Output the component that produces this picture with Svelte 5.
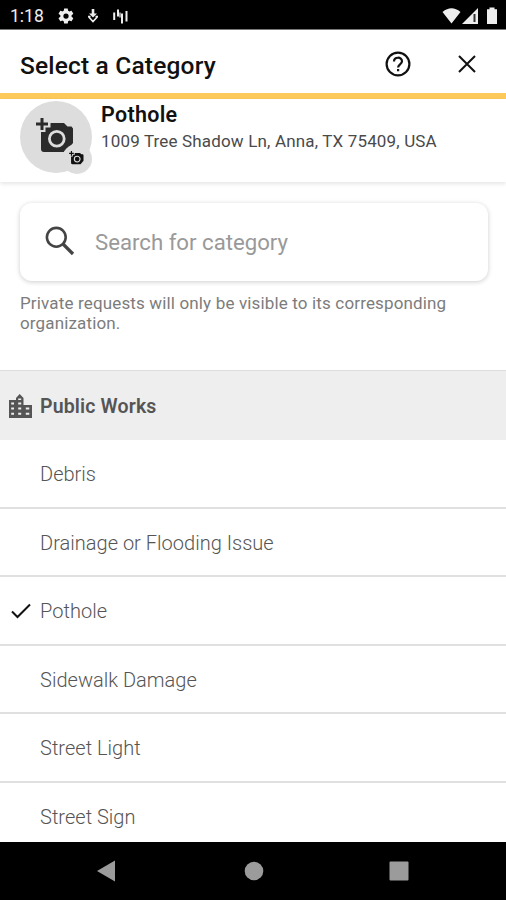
<script>
	const title = 'Select a Category';
	const categories = [
		'Debris',
		'Drainage or Flooding Issue',
		'Pothole',
		'Sidewalk Damage',
		'Street Light',
		'Street Sign'
	];

	let selected = $state('Pothole');
	let query = $state('');
</script>

{#snippet camera(className)}
	<svg class={className} viewBox="0 0 38 36" aria-hidden="true">
		<path
			fill="currentColor"
			d="M4.500 0h3v4.500H12v3H7.500V12h-3V7.500H0v-3h4.500zM14.500 5H28l3.500 3.500h4L37 10.500V25l-7.500 9H8q-3 0-3-3V14h4.500V9.500h5z"
		/>
		<circle class="lens" cx="20.800" cy="20.800" r="7.400" />
	</svg>
{/snippet}

<div class="screen">
	<div class="status">
		<span class="time">1:18</span>
		<svg class="gear" width="18" height="18" viewBox="0 0 24 24" aria-hidden="true" fill="currentColor">
			<path
				d="M19.400 13a7.700 7.700 0 0 0 0-2l2.100-1.600c.2-.2.2-.4.1-.7l-2-3.400c-.1-.2-.4-.3-.6-.2l-2.500 1a7.300 7.300 0 0 0-1.700-1l-.4-2.600c0-.3-.2-.5-.5-.5h-4c-.3 0-.5.200-.5.500L9 5.100a7.300 7.300 0 0 0-1.700 1l-2.500-1c-.2-.1-.5 0-.6.200l-2 3.400c-.1.300 0 .5.100.7L4.500 11a7.700 7.700 0 0 0 0 2l-2.200 1.600c-.2.200-.2.400-.1.700l2 3.400c.1.200.4.300.6.200l2.500-1a7.300 7.300 0 0 0 1.700 1l.4 2.600c0 .3.200.5.500.5h4c.3 0 .5-.2.5-.5l.4-2.600a7.300 7.300 0 0 0 1.700-1l2.500 1c.2.100.5 0 .6-.2l2-3.400c.1-.3.100-.5-.1-.7zM12 15.500a3.500 3.500 0 1 1 0-7 3.500 3.500 0 0 1 0 7z"
			/>
		</svg>
		<svg class="download" width="12" height="14" viewBox="0 0 12 14" aria-hidden="true" fill="none" stroke="currentColor">
			<path stroke-width="2.600" d="M6 0v6" />
			<path fill="currentColor" stroke="none" d="M2 4.500h8L6 8.500z" />
			<path stroke-width="1.700" d="M1 7.500h2.500M8.500 7.500H11M1.800 8L6 12.500 10.200 8" />
		</svg>
		<svg class="bars" width="15" height="16" viewBox="0 0 15 16" aria-hidden="true" stroke="currentColor" stroke-width="2">
			<path d="M1.200 4.500v7.500M5 1.500v7M9 5.500v10M13.500 3v10.500" />
			<path stroke-width="1.200" d="M7 4.500v5" />
		</svg>
		<span class="spacer"></span>
		<svg class="signal" width="56" height="18" viewBox="0 0 56 18" aria-hidden="true" fill="currentColor">
			<path d="M.5 5Q9.500-2.500 18.500 5L9.500 16.500zM36 1v16H20z" />
			<path fill="#333" d="M31.500 7h2v8h-2z" />
			<path d="M47.500 .5h5V2.200H55V17H45V2.200h2.500z" />
		</svg>
	</div>

	<header>
		<h1>{title}</h1>
		<button type="button" class="help" aria-label="Help">
			<svg width="26" height="26" viewBox="0 0 26 26" aria-hidden="true" fill="none" stroke="currentColor" stroke-width="2.200">
				<circle cx="13" cy="13" r="11.400" />
				<path d="M9 10.500C9 5.500 17 5.500 17 10.300c0 3-3.900 3.200-3.900 6.200M13.100 18v2.300" />
			</svg>
		</button>
		<button type="button" aria-label="Close">
			<svg width="18" height="18" viewBox="0 0 18 18" aria-hidden="true" fill="none" stroke="currentColor" stroke-width="2">
				<path d="M1 1l16 16M17 1L1 17" />
			</svg>
		</button>
	</header>

	<section class="report">
		<div class="avatar">
			{@render camera('photo')}
			<span class="badge">{@render camera('mini')}</span>
		</div>
		<div class="details">
			<h2>Pothole</h2>
			<p>1009 Tree Shadow Ln, Anna, TX 75409, USA</p>
		</div>
	</section>

	<section class="search">
		<label class="field">
			<svg width="30" height="30" viewBox="0 0 30 30" aria-hidden="true" fill="none" stroke="currentColor" stroke-width="2.600">
				<circle cx="11.300" cy="11.300" r="9.400" />
				<path stroke-width="3.200" d="M18 18l10 10" />
			</svg>
			<input type="text" placeholder="Search for category" bind:value={query} />
		</label>
		<p class="note">Private requests will only be visible to its corresponding organization.</p>
	</section>

	<div class="group">
		<svg width="24" height="24" viewBox="0 0 24 24" aria-hidden="true" fill="currentColor">
			<path
				fill-rule="evenodd"
				d="M1 6h7V4l3.700-4L15.500 4v7H24v13H1zM3.200 8.500v2h2.800v-2zM3.200 13.500v2h2.800v-2zM3.200 18.800v2h2.800v-2zM10.200 4.500v1.500h3V4.500zM10.200 8.500v2h3v-2zM10.200 13.500v2h3v-2zM10.200 18.800v2h3v-2zM17.800 13.500v2h3.500v-2zM17.800 18.800v2h3.500v-2z"
			/>
		</svg>
		<span>Public Works</span>
	</div>

	<ul>
		{#each categories as category}
			<li>
				<button type="button" class="row" onclick={() => (selected = category)}>
					<span class="mark">
						{#if category === selected}
							<svg width="20" height="16" viewBox="0 0 20 16" aria-hidden="true" fill="none" stroke="currentColor" stroke-width="2">
								<path d="M1 8.500l5.500 5.500L19 1.500" />
							</svg>
						{/if}
					</span>
					<span>{category}</span>
				</button>
			</li>
		{/each}
	</ul>

	<nav>
		<svg width="18" height="22" viewBox="0 0 18 22" aria-hidden="true"><path d="M0 11L18 .5v21z" /></svg>
		<svg width="20" height="20" viewBox="0 0 20 20" aria-hidden="true"><circle cx="10" cy="10" r="9.300" /></svg>
		<svg width="20" height="20" viewBox="0 0 20 20" aria-hidden="true"><rect x=".5" y=".5" width="19" height="19" rx="1" /></svg>
	</nav>
</div>

<style>
	.screen {
		display: flex;
		flex-direction: column;
		width: 506px;
		height: 900px;
		overflow: hidden;
		background: #fff;
		color: #111;
		font-family: Roboto, 'Liberation Sans', sans-serif;
	}

	h1,
	h2,
	p,
	ul {
		margin: 0;
		padding: 0;
	}

	button {
		display: flex;
		padding: 0;
		border: 0;
		background: none;
		color: inherit;
		font: inherit;
		cursor: pointer;
	}

	.status {
		flex: none;
		display: flex;
		align-items: center;
		box-sizing: border-box;
		height: 30px;
		padding: 2px 8px 0 10px;
		border-bottom: 1px solid #777;
		background: #000;
		color: #eee;
	}

	.time {
		width: 47px;
		font-size: 17.500px;
		font-weight: 400;
	}

	.download {
		margin-left: 12px;
	}

	.bars {
		margin-left: 14px;
	}

	.spacer {
		flex: 1;
	}

	header {
		flex: none;
		display: flex;
		align-items: center;
		box-sizing: border-box;
		height: 69px;
		padding: 0 30px 0 20px;
		border-bottom: 6px solid #fdc95a;
	}

	h1 {
		flex: 1;
		padding-top: 8px;
		font-size: 24.500px;
		font-weight: 500;
		line-height: 29px;
		letter-spacing: 0.18px;
	}

	header button {
		padding-top: 5px;
	}

	.help {
		margin-right: 47px;
	}

	.report {
		flex: none;
		display: flex;
		height: 83px;
		padding-left: 20px;
		box-shadow: 0 2px 4px rgba(0, 0, 0, 0.1);
	}

	.avatar {
		position: relative;
		box-sizing: border-box;
		width: 72px;
		height: 72px;
		margin-top: 2px;
		padding: 17px 0 0 16px;
		border-radius: 50%;
		background: #ddd;
		color: #2b2b2b;
	}

	.avatar :global(.photo) {
		display: block;
		width: 38px;
		height: 36px;
	}

	.badge {
		position: absolute;
		right: 0;
		bottom: -1px;
		display: flex;
		align-items: center;
		justify-content: center;
		box-sizing: border-box;
		width: 30px;
		height: 30px;
		padding: 0 1px 2px 0;
		border-radius: 50%;
		background: #ddd;
		color: #111;
	}

	.avatar :global(.mini) {
		width: 15px;
		height: 14px;
	}

	.lens {
		fill: none;
		stroke: #ddd;
		stroke-width: 2.800;
	}

	.details {
		padding: 4px 0 0 9px;
	}

	h2 {
		font-size: 21.500px;
		font-weight: 600;
		line-height: 24px;
		letter-spacing: 0.3px;
	}

	.details p {
		padding-top: 4px;
		color: #4a4a4a;
		font-size: 17px;
		line-height: 20px;
		letter-spacing: 0.16px;
		white-space: nowrap;
	}

	.search {
		flex: none;
		box-sizing: border-box;
		height: 188px;
		padding: 21px 18px 0 20px;
	}

	.field {
		display: flex;
		align-items: center;
		box-sizing: border-box;
		height: 78px;
		padding: 0 0 2px 25px;
		border-radius: 12px;
		box-shadow: 0 1px 5px rgba(0, 0, 0, 0.2);
		color: #444;
	}

	input {
		flex: 1;
		padding: 2px 0 0;
		margin-left: 20px;
		border: 0;
		outline: 0;
		background: none;
		color: #333;
		font: 400 22.200px Roboto, 'Liberation Sans', sans-serif;
	}

	input::placeholder {
		color: #999;
		opacity: 1;
	}

	.note {
		padding-top: 12px;
		color: #7c7c7c;
		font-size: 17px;
		line-height: 20px;
		letter-spacing: 0.15px;
	}

	.group {
		flex: none;
		display: flex;
		align-items: center;
		gap: 8px;
		box-sizing: border-box;
		height: 70px;
		border-top: 1px solid #ddd;
		padding-left: 8px;
		background: #eee;
		color: #555;
		font-size: 19.500px;
		font-weight: 600;
		letter-spacing: 0.15px;
	}

	.group span {
		padding-top: 2px;
	}

	ul {
		flex: 1;
		min-height: 0;
		overflow: hidden;
		list-style: none;
	}

	li {
		box-sizing: border-box;
		height: 68.500px;
		border-bottom: 2px solid #e0e0e0;
	}

	.row {
		align-items: center;
		width: 100%;
		height: 100%;
		padding-top: 2px;
		color: #555;
		font-size: 20px;
		font-weight: 300;
		letter-spacing: 0.02px;
		text-align: left;
	}

	.mark {
		display: flex;
		box-sizing: border-box;
		width: 40px;
		padding-left: 11px;
		color: #111;
	}

	nav {
		flex: none;
		display: flex;
		align-items: center;
		justify-content: space-between;
		box-sizing: border-box;
		height: 58px;
		padding: 0 97px 0 97px;
		background: #000;
		fill: #9b9b9b;
	}

	nav svg:nth-child(2) {
		margin-left: 3px;
	}
</style>
